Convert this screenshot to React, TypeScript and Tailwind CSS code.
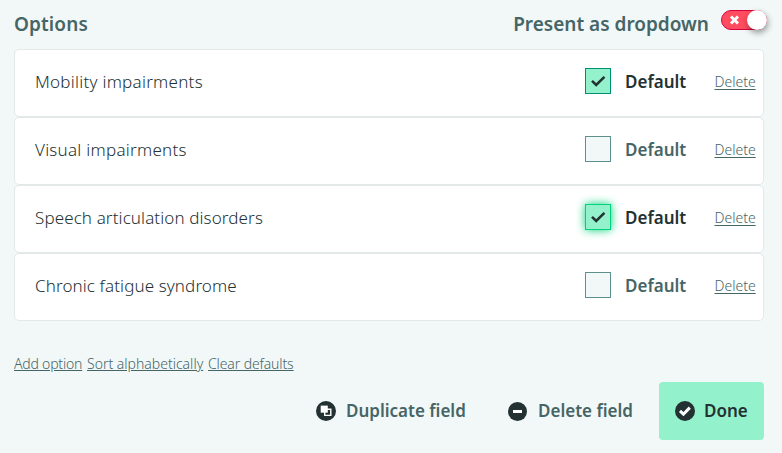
import React, { useState } from 'react'

interface Option {
  label: string
  checked: boolean
  tracking: string
  focused?: boolean
}

const initialOptions: Option[] = [
  { label: 'Mobility impairments', checked: true, tracking: 'tracking-[0.26px]' },
  { label: 'Visual impairments', checked: false, tracking: 'tracking-[0.26px]' },
  { label: 'Speech articulation disorders', checked: true, tracking: 'tracking-[0.11px]', focused: true },
  { label: 'Chronic fatigue syndrome', checked: false, tracking: 'tracking-[0.11px]' },
]

const Toggle: React.FC = () => (
  <button
    type="button"
    role="switch"
    aria-checked={false}
    aria-label="Present as dropdown"
    className="flex h-5 w-[46px] shrink-0 items-center justify-between rounded-full border border-[#d8003f] bg-[#ff4c5e] pl-[7px]"
  >
    <svg width="11" height="10" viewBox="0 0 11 10" className="shrink-0">
      <path d="M2 1.5 9 8.5M9 1.5 2 8.5" stroke="#fff" strokeWidth="3" />
    </svg>
    <span className="-mr-px size-5 rounded-full bg-white shadow-[1px_3px_6px_rgba(0,0,0,0.4)]" />
  </button>
)

const Checkbox: React.FC<{ option: Option; onChange: () => void }> = ({ option, onChange }) => {
  let box = 'border-[#5f908d] bg-[#f2f8f8]'
  if (option.checked) box = 'border-[#008f75] bg-[#93f2cb]'
  if (option.focused) box = 'border-[#00d27c] bg-[#93f2cb] shadow-[0_0_10px_#00d27c]'

  return (
    <button
      type="button"
      role="checkbox"
      aria-checked={option.checked}
      onClick={onChange}
      className={`-mt-[3px] flex size-[26px] shrink-0 items-center justify-center border ${box}`}
    >
      {option.checked && (
        <svg width="16" height="12" viewBox="0 0 16 12" className="mt-px">
          <path d="M2 5.8 6.2 10 14.4 1.8" fill="none" stroke="#233133" strokeWidth="2.5" />
        </svg>
      )}
    </button>
  )
}

const App: React.FC = () => {
  const [options, setOptions] = useState(initialOptions)

  const toggleOption = (index: number) => {
    setOptions((prev) => prev.map((o, i) => (i === index ? { ...o, checked: !o.checked } : o)))
  }

  return (
    <div className="h-[453px] w-[782px] overflow-hidden bg-[#f2f8f8] pl-[14px] font-['Noto_Sans',sans-serif] text-[#466566]">
      <header className="flex h-[49px] items-start justify-between pr-[15px]">
        <h2 className="pt-[10px] text-[19px] leading-7 font-semibold tracking-[0.1px]">Options</h2>
        <div className="flex gap-3">
          <span className="pt-[10px] text-[19px] leading-7 font-semibold whitespace-nowrap">Present as dropdown</span>
          <div className="pt-[10px]">
            <Toggle />
          </div>
        </div>
      </header>

      <ul className="w-[750px]">
        {options.map((option, index) => (
          <li
            key={option.label}
            className="flex h-[68px] items-center rounded-[5px] border border-[#e3e9e8] bg-white pb-[2px] pl-5"
          >
            <span className={`w-[550px] text-[17px] font-light whitespace-nowrap text-[#233133] ${option.tracking}`}>
              {option.label}
            </span>
            <Checkbox option={option} onChange={() => toggleOption(index)} />
            <span
              className={`ml-[14px] w-[89.5px] text-[17px] font-semibold ${option.checked ? 'text-[#233133]' : ''}`}
            >
              Default
            </span>
            <a href="#" className="text-[14px] leading-5 font-light underline underline-offset-2">
              Delete
            </a>
          </li>
        ))}
      </ul>

      <nav className="mt-[33px] flex h-5 gap-[5px] text-[14px] leading-5 font-light whitespace-nowrap">
        <a href="#" className="w-[68px] tracking-[-0.2px] underline underline-offset-1">Add option</a>
        <a href="#" className="w-[116px] underline underline-offset-1">Sort alphabetically</a>
        <a href="#" className="tracking-[-0.12px] underline underline-offset-1">Clear defaults</a>
      </nav>

      <footer className="mt-2 flex h-[58px] items-center pl-[302px] text-[17px] font-semibold whitespace-nowrap">
        <button type="button" className="flex w-[192px] items-center gap-[10px]">
          <svg width="20" height="20" viewBox="0 0 20 20" className="shrink-0">
            <circle cx="10" cy="10" r="10" fill="#233133" />
            <path d="M8.7 8.2h6.1v6.2H8.7z" fill="none" stroke="#fff" strokeWidth="1.4" />
            <path d="M4.7 4.6h7.1v7.1H4.7z" fill="#fff" />
          </svg>
          <span>Duplicate field</span>
        </button>
        <button type="button" className="flex w-[151px] items-center gap-[11px]">
          <svg width="19" height="19" viewBox="0 0 19 19" className="shrink-0">
            <circle cx="9.5" cy="9.5" r="9.5" fill="#233133" />
            <path d="M5 8h9v3H5z" fill="#fff" />
          </svg>
          <span>Delete field</span>
        </button>
        <button
          type="button"
          className="flex h-[58px] w-[105px] items-center gap-[9px] rounded-[4px] bg-[#93f2cb] pl-4 text-[#233133]"
        >
          <svg width="20" height="20" viewBox="0 0 20 20" className="shrink-0">
            <circle cx="10" cy="10" r="10" fill="#233133" />
            <path d="M5 9.9 8.4 13.2 14.8 6.6" fill="none" stroke="#fff" strokeWidth="3" />
          </svg>
          <span>Done</span>
        </button>
      </footer>
    </div>
  )
}

export default App
